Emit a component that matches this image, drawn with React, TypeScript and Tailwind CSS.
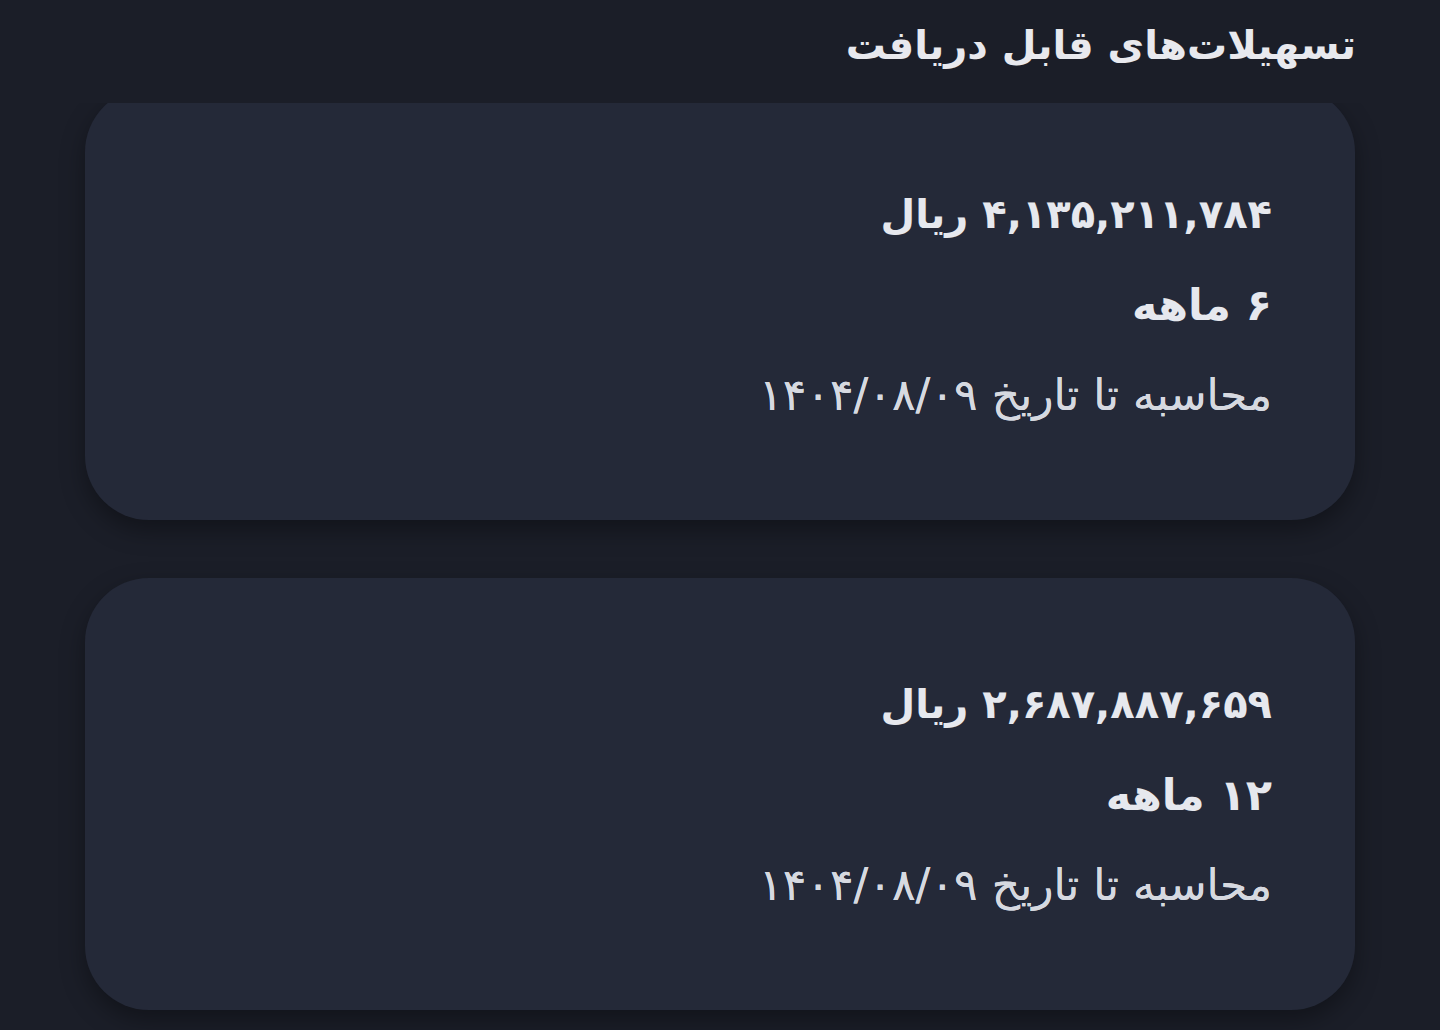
import React from 'react';

interface Loan {
  amount: string;
  months: string;
  date: string;
}

const loans: Loan[] = [
  { amount: '۴,۱۳۵,۲۱۱,۷۸۴', months: '۶', date: '۱۴۰۴/۰۸/۰۹' },
  { amount: '۲,۶۸۷,۸۸۷,۶۵۹', months: '۱۲', date: '۱۴۰۴/۰۸/۰۹' },
];

const LoanCard: React.FC<{ loan: Loan; className?: string }> = ({ loan, className }) => (
  <div
    className={
      'h-[432px] rounded-[64px] bg-[#242938] shadow-[0_10px_24px_rgba(0,0,0,0.35)] px-[83px] flex flex-col justify-center ' +
      (className || '')
    }
  >
    <div className="h-[90px] flex items-center text-[40px] font-bold text-[#e6e8ee]">
      {loan.amount} ریال
    </div>
    <div className="h-[92px] flex items-center text-[43px] font-bold text-[#e6e8ee]">
      {loan.months} ماهه
    </div>
    <div className="h-[88px] flex items-center text-[44px] text-[#d6d9e0] [text-shadow:0_0_0.6px_#d6d9e0]">
      محاسبه تا تاریخ {loan.date}
    </div>
  </div>
);

export default function App() {
  return (
    <div
      dir="rtl"
      className="w-[1440px] h-[1030px] bg-[#1b1e28] overflow-hidden"
      style={{ fontFamily: '"DejaVu Sans", sans-serif' }}
    >
      <div className="h-[103px] pr-[84px] flex items-start pt-[14px]">
        <h1 className="text-[40px] font-bold text-[#e8e9ee] leading-[62px]">تسهیلات‌های قابل دریافت</h1>
      </div>
      <div className="h-[927px] overflow-hidden px-[85px] flex flex-col gap-[58px]">
        <LoanCard loan={loans[0]} className="-mt-[15px] shrink-0" />
        <LoanCard loan={loans[1]} className="shrink-0" />
      </div>
    </div>
  );
}
